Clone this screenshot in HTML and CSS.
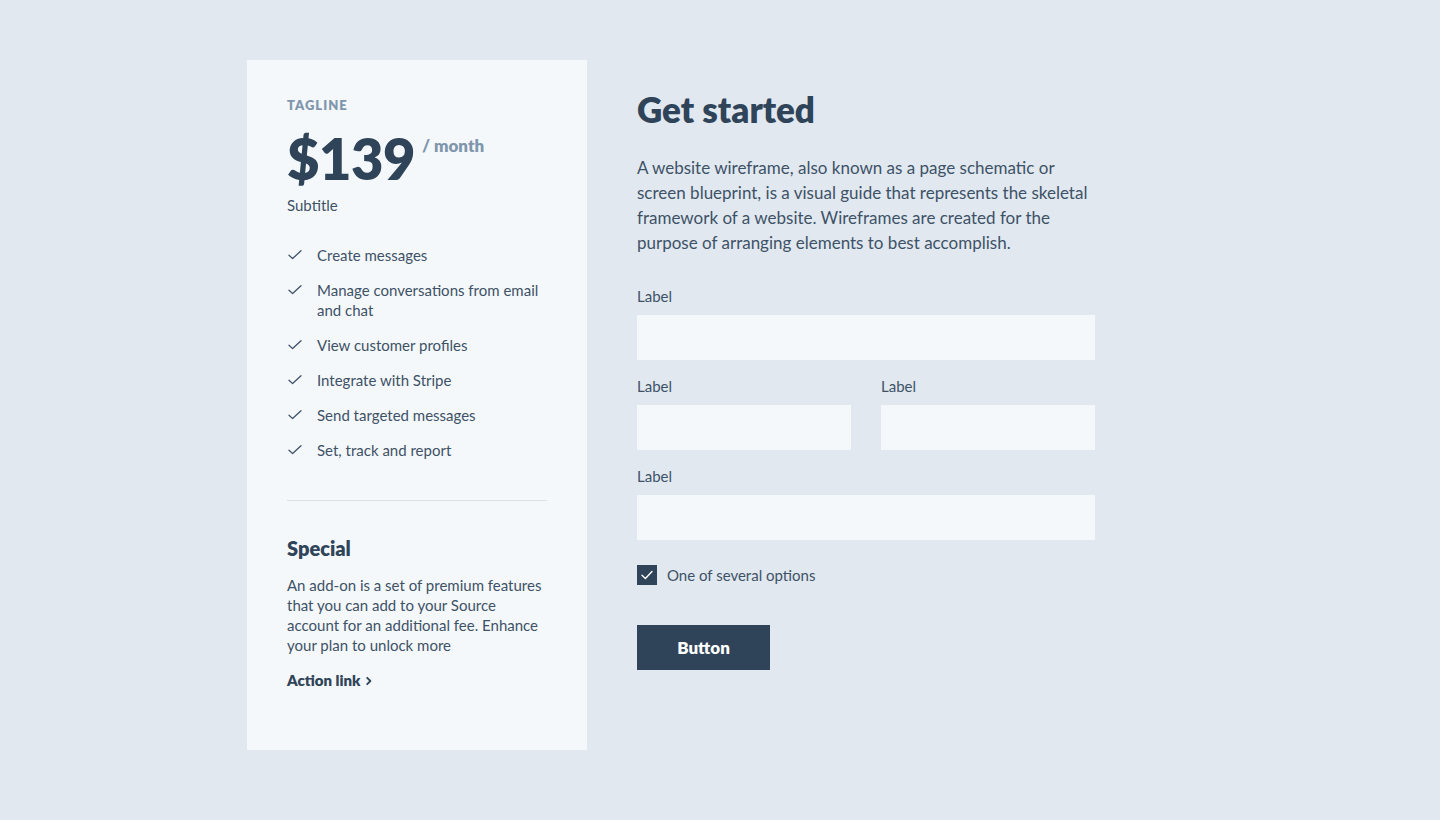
FILE: index.html
```html
<!DOCTYPE html>
<html lang="en">
<head>
<meta charset="utf-8">
<title>Get started</title>
<link rel="stylesheet" href="styles.css">
</head>
<body>
<main class="page">
  <aside class="plan">
    <div class="tagline">TAGLINE</div>
    <div class="price-row">
      <span class="price">$139</span>
      <span class="period">/ month</span>
    </div>
    <div class="subtitle">Subtitle</div>
    <ul class="features">
      <li><svg class="check" viewBox="0 0 16 16"><path d="M2 8.2 L5.6 11.6 L14 3.8"/></svg><span>Create messages</span></li>
      <li><svg class="check" viewBox="0 0 16 16"><path d="M2 8.2 L5.6 11.6 L14 3.8"/></svg><span>Manage conversations from email and chat</span></li>
      <li><svg class="check" viewBox="0 0 16 16"><path d="M2 8.2 L5.6 11.6 L14 3.8"/></svg><span>View customer profiles</span></li>
      <li><svg class="check" viewBox="0 0 16 16"><path d="M2 8.2 L5.6 11.6 L14 3.8"/></svg><span>Integrate with Stripe</span></li>
      <li><svg class="check" viewBox="0 0 16 16"><path d="M2 8.2 L5.6 11.6 L14 3.8"/></svg><span>Send targeted messages</span></li>
      <li><svg class="check" viewBox="0 0 16 16"><path d="M2 8.2 L5.6 11.6 L14 3.8"/></svg><span>Set, track and report</span></li>
    </ul>
    <hr class="divider">
    <h2 class="special-title">Special</h2>
    <p class="special-text">An add-on is a set of premium features that you can add to your Source account for an additional fee. Enhance your plan to unlock more</p>
    <a class="action-link" href="#">Action link <svg class="chev" viewBox="0 0 8 10"><path d="M2.2 1.8 L5.4 5 L2.2 8.2"/></svg></a>
  </aside>

  <section class="form-col">
    <h1 class="title">Get started</h1>
    <p class="intro">A website wireframe, also known as a page schematic or screen blueprint, is a visual guide that represents the skeletal framework of a website. Wireframes are created for the purpose of arranging elements to best accomplish.</p>
    <form class="form">
      <div class="field">
        <label class="label">Label</label>
        <div class="input"></div>
      </div>
      <div class="field-row">
        <div class="field">
          <label class="label">Label</label>
          <div class="input"></div>
        </div>
        <div class="field">
          <label class="label">Label</label>
          <div class="input"></div>
        </div>
      </div>
      <div class="field">
        <label class="label">Label</label>
        <div class="input"></div>
      </div>
      <div class="option">
        <span class="checkbox"><svg viewBox="0 0 20 20"><path d="M5 10.2 L8.4 13.4 L15 6.6"/></svg></span>
        <span class="option-text">One of several options</span>
      </div>
      <button type="button" class="button">Button</button>
    </form>
  </section>
</main>
</body>
</html>
```

FILE: styles.css
```css
* { box-sizing: border-box; }

html, body {
  margin: 0;
  padding: 0;
}

body {
  background: #e1e8f0;
  font-family: Lato, "Open Sans", "Liberation Sans", sans-serif;
  color: #3e5267;
  width: 1440px;
  height: 820px;
}

.page {
  display: flex;
  align-items: flex-start;
  padding: 60px 0 0 247px;
  gap: 50px;
}

/* Plan card */
.plan {
  width: 340px;
  height: 690px;
  background: #f5f8fb;
  padding: 37px 40px 0 40px;
}

.tagline {
  font-size: 13px;
  line-height: 16px;
  font-weight: 800;
  letter-spacing: 1px;
  color: #7f96ac;
}

.price-row {
  display: flex;
  align-items: flex-start;
  margin-top: 18px;
}

.price {
  font-size: 56px;
  line-height: 56px;
  font-weight: 800;
  color: #2f4459;
  letter-spacing: -0.5px;
}

.period {
  font-size: 17px;
  line-height: 22px;
  font-weight: 800;
  color: #7f96ac;
  margin-top: 4px;
  margin-left: 7px;
}

.subtitle {
  font-size: 15px;
  line-height: 20px;
  margin-top: 8px;
  color: #3e5267;
}

.features {
  list-style: none;
  margin: 30px 0 0 0;
  padding: 0;
  display: flex;
  flex-direction: column;
  gap: 15px;
}

.features li {
  display: flex;
  align-items: flex-start;
  font-size: 15px;
  line-height: 20px;
  color: #3e5267;
}

.check {
  width: 16px;
  height: 16px;
  flex: none;
  margin-top: 2px;
  margin-right: 14px;
}

.check path {
  fill: none;
  stroke: #3e5267;
  stroke-width: 1.3;
  stroke-linecap: round;
  stroke-linejoin: round;
}

.divider {
  border: 0;
  height: 1px;
  background: #d8e0e8;
  margin: 40px 0 0 0;
}

.special-title {
  font-size: 20px;
  line-height: 28px;
  font-weight: 800;
  color: #2f4459;
  margin: 33px 0 0 0;
}

.special-text {
  font-size: 15px;
  line-height: 20px;
  margin: 13px 0 0 0;
  color: #3e5267;
}

.action-link {
  display: inline-flex;
  align-items: center;
  gap: 5px;
  margin-top: 15px;
  font-size: 15px;
  line-height: 20px;
  font-weight: 800;
  color: #2f4459;
  text-decoration: none;
}

.chev {
  width: 8px;
  height: 10px;
  margin-top: 1px;
}

.chev path {
  fill: none;
  stroke: #2f4459;
  stroke-width: 1.8;
  stroke-linecap: round;
  stroke-linejoin: round;
}

/* Form column */
.form-col {
  width: 458px;
  padding-top: 27px;
}

.title {
  font-size: 35px;
  line-height: 44px;
  font-weight: 800;
  color: #2f4459;
  margin: 0;
}

.intro {
  font-size: 17px;
  line-height: 25px;
  margin: 24px 0 0 0;
  color: #3e5267;
}

.form {
  margin-top: 31px;
  display: flex;
  flex-direction: column;
  gap: 16px;
}

.field {
  display: flex;
  flex-direction: column;
  gap: 9px;
  flex: 1;
}

.field-row {
  display: flex;
  gap: 30px;
}

.label {
  font-size: 15px;
  line-height: 20px;
  color: #3e5267;
}

.input {
  height: 45px;
  background: #f5f8fb;
}

.option {
  display: flex;
  align-items: center;
  gap: 10px;
  margin-top: 9px;
}

.checkbox {
  width: 20px;
  height: 20px;
  background: #2f4459;
  display: flex;
}

.checkbox svg {
  width: 20px;
  height: 20px;
}

.checkbox path {
  fill: none;
  stroke: #ffffff;
  stroke-width: 1.4;
  stroke-linecap: round;
  stroke-linejoin: round;
}

.option-text {
  font-size: 15px;
  line-height: 20px;
  color: #3e5267;
}

.button {
  align-self: flex-start;
  margin-top: 24px;
  height: 45px;
  width: 133px;
  border: 0;
  background: #2f4459;
  color: #ffffff;
  font-family: Lato, "Open Sans", "Liberation Sans", sans-serif;
  font-size: 17px;
  font-weight: 800;
  padding: 0;
}
```
